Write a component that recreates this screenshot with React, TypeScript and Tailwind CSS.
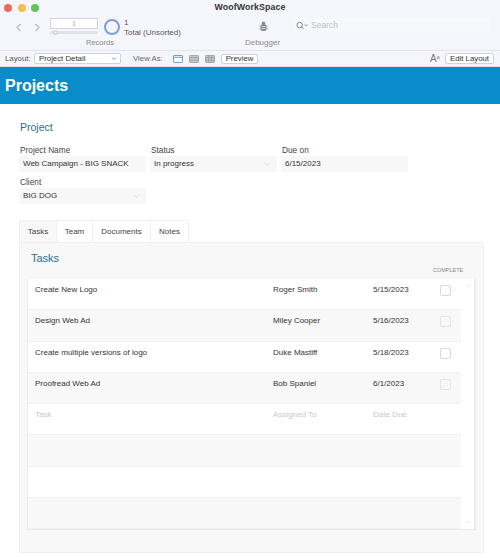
import React from "react";

const Chevron = ({ className }: { className?: string }) => (
  <svg viewBox="0 0 10 6" className={className} fill="none" stroke="currentColor" strokeWidth="1.2">
    <path d="M1 1l4 4 4-4" />
  </svg>
);

const Field = ({ label, value, width, chevron }: { label: string; value: string; width: string; chevron?: boolean }) => (
  <div className={`flex flex-col ${width}`}>
    <div className="h-[13px] pl-px pt-px text-[8.3px] leading-[12px] text-[#444]">{label}</div>
    <div className="flex h-[16px] items-center justify-between rounded-[2px] bg-[#f7f7f7] pl-[4px] pr-[6px] text-[8px] text-[#333]">
      <span>{value}</span>
      {chevron && <Chevron className="h-[4px] w-[7px] text-[#d5d5d5]" />}
    </div>
  </div>
);

const rows = [
  ["Create New Logo", "Roger Smith", "5/15/2023"],
  ["Design Web Ad", "Miley Cooper", "5/16/2023"],
  ["Create multiple versions of logo", "Duke Mastiff", "5/18/2023"],
  ["Proofread Web Ad", "Bob Spaniel", "6/1/2023"],
];

const Row = ({ cells, odd, muted, check }: { cells: string[]; odd: boolean; muted?: boolean; check?: boolean }) => (
  <div className={`flex h-[31.3px] border-b border-[#f2f2f2] pt-[4px] text-[8px] leading-[13px] ${odd ? "bg-[#f8f8f8]" : "bg-white"} ${muted ? "text-[#c8c8c8]" : "text-[#333]"}`}>
    <div className="w-[245px] pl-[7px]">{cells[0]}</div>
    <div className="w-[100px]">{cells[1]}</div>
    <div className="w-[67px]">{cells[2]}</div>
    {check && <div className={`mt-[2px] h-[11px] w-[11px] rounded-[2px] border ${odd ? "border-[#e4e4e4]" : "border-[#d8d8d8] bg-white"}`} />}
  </div>
);

const ViewIcon = ({ active, kind }: { active?: boolean; kind: number }) => {
  const c = active ? "#4a86c8" : "#9a9a9a";
  return (
    <svg width="10" height="8" viewBox="0 0 10 8" fill={active ? "#fff" : "#c8c8c8"} stroke={c} strokeWidth="0.8">
      <rect x="0.5" y="0.5" width="9" height="7" rx="0.6" />
      <path d={kind === 0 ? "M.5 2.3h9" : kind === 1 ? "M.5 2.7h9M.5 5.2h9" : "M.5 2.7h9M.5 5.2h9M3.5.5v7M6.5.5v7"} fill="none" />
    </svg>
  );
};

export default function App() {
  return (
    <div className="h-[558px] w-[500px] overflow-hidden bg-white font-['Liberation_Sans',Arial,sans-serif]">
      {/* Window toolbar */}
      <div className="h-[51px] border-b border-[#e4e5ea] bg-[#f5f6fb]">
        <div className="flex h-[15px] items-center pl-[4px] pt-px">
          <div className="flex w-[146px] gap-[5.5px]">
            <span className="h-[8px] w-[8px] rounded-full bg-[#ee6a5f]" />
            <span className="h-[8px] w-[8px] rounded-full bg-[#f5bd4f]" />
            <span className="h-[8px] w-[8px] rounded-full bg-[#61c454]" />
          </div>
          <div className="w-[200px] text-center text-[8.8px] font-bold tracking-[0.1px] text-[#333]">WoofWorkSpace</div>
        </div>
        <div className="flex h-[20px] pl-[15px] pt-[3px]">
          <div className="flex w-[35px] items-start gap-[12px] pt-[5px] text-[#8c8c90]">
            <svg width="7" height="9" viewBox="0 0 7 9" fill="none" stroke="currentColor" strokeWidth="1"><path d="M5.5 1L2 4.5 5.5 8" /></svg>
            <svg width="7" height="9" viewBox="0 0 7 9" fill="none" stroke="currentColor" strokeWidth="1"><path d="M1.5 1L5 4.5 1.5 8" /></svg>
          </div>
          <div className="w-[54px]">
            <div className="flex h-[11px] w-[48px] items-center justify-center border border-[#d4d4d8] bg-white text-[6.5px] text-[#b0b0b0]">1</div>
            <div className="mt-[2px] flex h-[3px] w-[48px] items-center rounded-full bg-[#e3e3e6]">
              <span className="ml-[3px] h-[5px] w-[5px] rounded-full border border-[#c8c8cc] bg-[#eee]" />
            </div>
          </div>
          <div className="mr-[4px] mt-[1px] h-[16px] w-[16px] rounded-full border-[2px] border-[#7e9fd6]" />
          <div className="w-[134px] text-[8px] leading-[10px] text-[#555]">
            <div>1</div>
            <div>Total (Unsorted)</div>
          </div>
          <div className="w-[35px] pl-[1px] pt-[3px] text-[#8a8a8e]">
            <svg width="9" height="11" viewBox="0 0 9 11" fill="currentColor">
              <rect x="1.5" y="3" width="6" height="7" rx="2.5" />
              <circle cx="4.5" cy="2.2" r="1.7" />
              <path d="M0 5h1.5M7.5 5H9M0 8h1.5M7.5 8H9" stroke="currentColor" strokeWidth="0.6" />
              <path d="M2.5 5.5h4M2.5 7.5h4" stroke="#f5f6fb" strokeWidth="0.7" />
            </svg>
          </div>
          <div className="flex h-[15px] w-[197px] items-center gap-[1px] rounded-[3px] bg-[#f7f8fc] pl-[3px] text-[8.5px] text-[#c0c0c4]">
            <svg width="12" height="9" viewBox="0 0 13 9" fill="none" stroke="#6f6f73" strokeWidth="0.9"><circle cx="4" cy="4" r="3" /><path d="M6.2 6.2L8.3 8.3M9.5 3.5l1.5 1.5 1.5-1.5" /></svg>
            <span className="ml-[2px]">Search</span>
          </div>
        </div>
        <div className="flex h-[15px] items-center text-[7.5px] text-[#8a8a8e]">
          <div className="w-[200px] text-center">Records</div>
          <div className="w-[125px] text-center text-[8px]">Debugger</div>
        </div>
      </div>
      {/* Layout bar */}
      <div className="flex h-[16px] items-center border-b border-[#dfe0e5] bg-[#f5f6fb] pl-[5px] text-[7.8px] text-[#555]">
        <span className="w-[29px]">Layout:</span>
        <div className="flex h-[11px] w-[87px] items-center justify-between rounded-[2px] border border-[#d2d2d6] bg-white pl-[4px] pr-[3px] text-[#333]">
          <span>Project Detail</span>
          <Chevron className="h-[3px] w-[6px] text-[#444]" />
        </div>
        <span className="ml-[12px] w-[40px] text-[#66666a]">View As:</span>
        <div className="flex w-[48px] gap-[6px]">
          <ViewIcon active kind={0} />
          <ViewIcon kind={1} />
          <ViewIcon kind={2} />
        </div>
        <div className="flex h-[10px] w-[37px] items-center justify-center rounded-[2px] border border-[#d2d2d6] bg-white text-[#333]">Preview</div>
        <span className="ml-[172px] w-[14px] text-[10px] leading-none text-[#77777b]">A<sup className="text-[5px]">a</sup></span>
        <div className="ml-[1px] flex h-[11px] w-[49px] items-center justify-center rounded-[2px] border border-[#d2d2d6] bg-white text-[#333]">Edit Layout</div>
      </div>
      {/* Blue header */}
      <div className="flex h-[37px] items-center bg-[#0a8ccb] pl-[5px] pt-px text-[16px] font-bold text-white">Projects</div>
      {/* Body */}
      <div className="pl-[19px] pt-[16px]">
        <div className="h-[14px] pl-px text-[10.5px] leading-[14px] text-[#2f6d8c]">Project</div>
        <div className="mt-[9px] flex gap-[4px]">
          <Field label="Project Name" value="Web Campaign - BIG SNACK" width="w-[127px]" />
          <Field label="Status" value="In progress" width="w-[127px]" chevron />
          <Field label="Due on" value="6/15/2023" width="w-[127px]" />
        </div>
        <div className="mt-[3px]">
          <Field label="Client" value="BIG DOG" width="w-[127px]" chevron />
        </div>
        <div className="mt-[16px] flex h-[22px] text-[8px] text-[#444]">
          <div className="flex w-[38px] items-center justify-center border border-b-0 border-[#f0f0f0] bg-[#f8f8f8]">Tasks</div>
          <div className="flex w-[36px] items-center justify-center border-r border-t border-[#f0f0f0]">Team</div>
          <div className="flex w-[58px] items-center justify-center border-r border-t border-[#f0f0f0]">Documents</div>
          <div className="flex w-[38px] items-center justify-center border-r border-t border-[#f0f0f0]">Notes</div>
        </div>
        <div className="h-[311px] w-[465px] border border-[#f0f0f0] bg-[#f8f8f8] pl-[7px]">
          <div className="h-[36px] pl-[4px] pt-[8px] text-[11px] leading-[14px] text-[#2f6d8c]">
            Tasks
            <div className="ml-[402px] mt-[2px] text-[5.5px] leading-[7px] text-[#8a8a8a]">COMPLETE</div>
          </div>
          <div className="flex h-[251px] w-[449px] flex-col border-b-2 border-l border-[#ececec] bg-white">
            <div className="flex">
              <div className="w-[433px]">
                {rows.map((r, i) => (
                  <Row key={r[0]} cells={r} odd={i % 2 === 1} check />
                ))}
                <Row cells={["Task", "Assigned To", "Date Due"]} odd={false} muted />
                <Row cells={["", "", ""]} odd />
                <Row cells={["", "", ""]} odd={false} />
                <Row cells={["", "", ""]} odd />
              </div>
              <div className="flex h-[250px] w-[15px] flex-col justify-between border-r-2 border-[#ececec] bg-white px-[4px] py-[5px] text-[#e2e2e2]">
                <Chevron className="h-[4px] w-[7px] rotate-180" />
                <Chevron className="h-[4px] w-[7px]" />
              </div>
            </div>
          </div>
        </div>
      </div>
    </div>
  );
}
